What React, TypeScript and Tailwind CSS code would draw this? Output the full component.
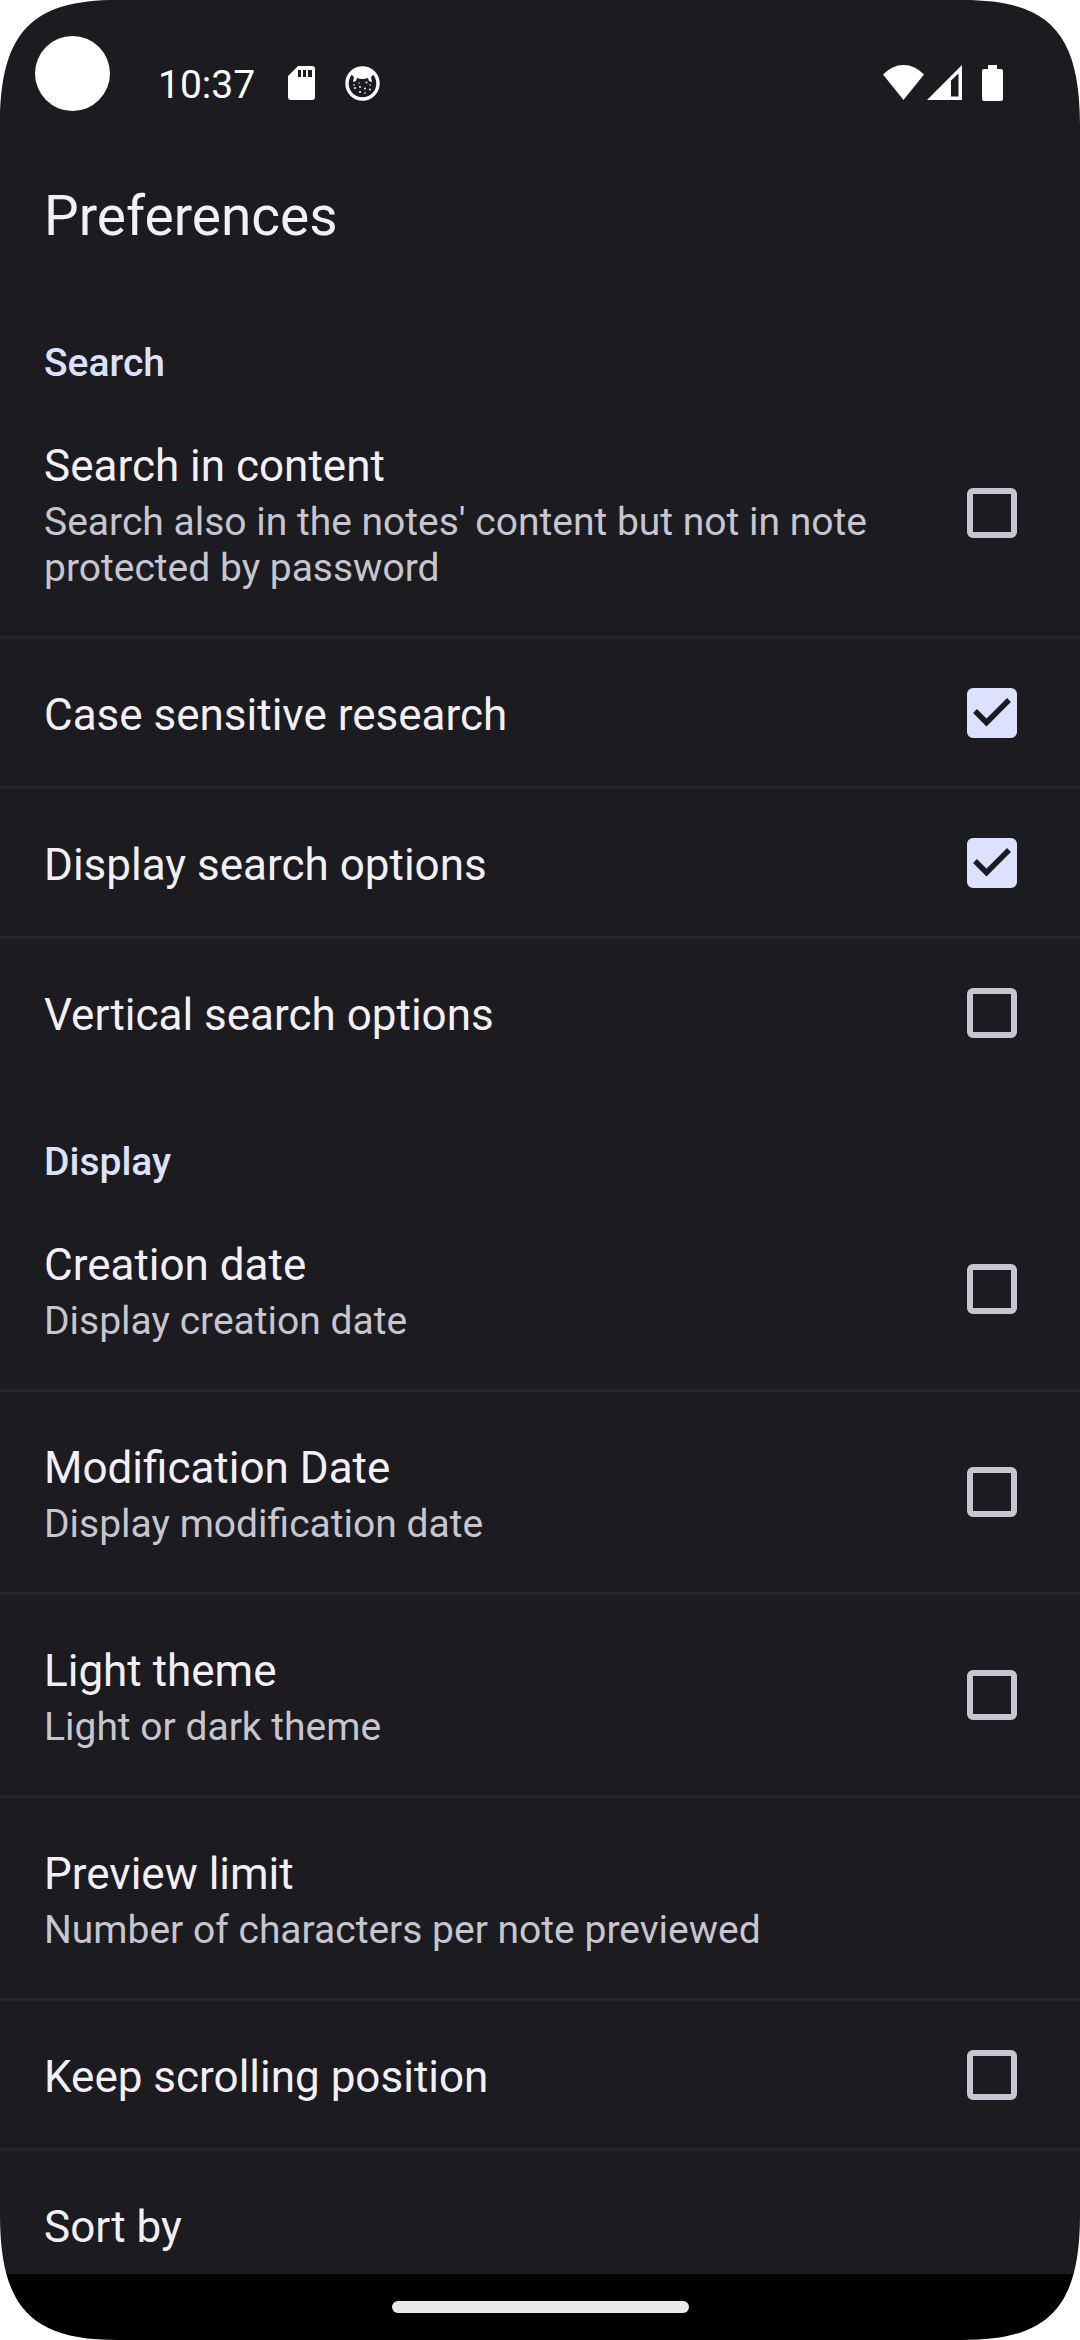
import { useState } from 'react';

interface Preference {
  id: string;
  title: string;
  summary?: string;
  checkbox?: boolean;
  defaultChecked?: boolean;
}

interface PreferenceGroup {
  title: string;
  items: Preference[];
}

const groups: PreferenceGroup[] = [
  {
    title: 'Search',
    items: [
      {
        id: 'search-in-content',
        title: 'Search in content',
        summary: "Search also in the notes' content but not in note protected by password",
        checkbox: true,
      },
      { id: 'case-sensitive', title: 'Case sensitive research', checkbox: true, defaultChecked: true },
      { id: 'search-options', title: 'Display search options', checkbox: true, defaultChecked: true },
      { id: 'vertical-options', title: 'Vertical search options', checkbox: true },
    ],
  },
  {
    title: 'Display',
    items: [
      { id: 'creation-date', title: 'Creation date', summary: 'Display creation date', checkbox: true },
      { id: 'modification-date', title: 'Modification Date', summary: 'Display modification date', checkbox: true },
      { id: 'light-theme', title: 'Light theme', summary: 'Light or dark theme', checkbox: true },
      { id: 'preview-limit', title: 'Preview limit', summary: 'Number of characters per note previewed' },
      { id: 'scroll-position', title: 'Keep scrolling position', checkbox: true },
      { id: 'sort-by', title: 'Sort by' },
    ],
  },
];

function StatusBar() {
  return (
    <div className="flex h-[148px] shrink-0 items-start justify-between pl-[35px] pr-[77px] pt-9 text-white">
      <div className="flex items-start">
        <div className="size-[75px] rounded-full bg-white" />
        <span className="ml-12 mt-[26px] text-[39px] leading-[46px]">10:37</span>
        <svg className="ml-[33px] mt-[30px] h-[34px] w-[27px]" viewBox="0 0 27 34" fill="currentColor">
          <path
            fillRule="evenodd"
            d="M10 0H24Q27 0 27 3V31Q27 34 24 34H3Q0 34 0 31V10ZM10 4V11H13V4ZM15 4V11H18V4ZM20 4V11H24V4Z"
          />
        </svg>
        <svg className="ml-[30px] mt-[30px] size-[35px]" viewBox="0 0 35 35" fill="none">
          <circle cx="17.5" cy="17.5" r="15.5" stroke="white" strokeWidth="3.4" />
          <path d="M6 8Q17 -3 29 8L26 11L27 16L24 15L23 12Q17 14 12 12L11 15L8 16L9 11Z" fill="white" />
          <g fill="white">
            <circle cx="9" cy="19" r="0.8" />
            <circle cx="10" cy="22" r="1" />
            <circle cx="14" cy="17" r="0.7" />
            <circle cx="15" cy="21" r="0.9" />
            <circle cx="21.5" cy="16.5" r="1" />
            <circle cx="20" cy="22.5" r="0.9" />
            <circle cx="15" cy="26" r="1" />
            <circle cx="20" cy="27" r="0.8" />
            <circle cx="25" cy="19" r="0.8" />
            <circle cx="25" cy="23.5" r="0.9" />
          </g>
        </svg>
      </div>
      <div className="mt-[29px] flex items-start">
        <svg className="h-[35px] w-[41px]" viewBox="0 0 41 35" fill="currentColor">
          <path d="M0 9.5Q9 0 20.5 0T41 9.5L20.5 35Z" />
        </svg>
        <svg className="ml-[3px] size-[35px]" viewBox="0 0 35 35" fill="currentColor">
          <path fillRule="evenodd" d="M35 0V35H0ZM24 15.5V31.5H31.5V8.5Z" />
        </svg>
        <svg className="ml-5 h-9 w-[21px]" viewBox="0 0 21 36" fill="currentColor">
          <path d="M6 0H15V4H19Q21 4 21 6V34Q21 36 19 36H2Q0 36 0 34V6Q0 4 2 4H6Z" />
        </svg>
      </div>
    </div>
  );
}

function PreferenceText({ title, summary }: { title: string; summary?: string }) {
  return (
    <span className="block flex-1 pb-[45px] pt-[50px]">
      <span className="block text-[44px] leading-[52px] text-[#f3eff7]">{title}</span>
      {summary && <span className="mt-[7px] block text-[39px] leading-[46px] text-[#c7c5d0]">{summary}</span>}
    </span>
  );
}

function PreferenceRow({ item }: { item: Preference }) {
  const [checked, setChecked] = useState(Boolean(item.defaultChecked));

  if (!item.checkbox) {
    return (
      <button type="button" className="flex w-full items-center px-11 text-left">
        <PreferenceText title={item.title} summary={item.summary} />
      </button>
    );
  }

  return (
    <label htmlFor={item.id} className="flex items-center gap-[60px] pl-11 pr-[63px]">
      <PreferenceText title={item.title} summary={item.summary} />
      <span className="grid shrink-0">
        <input
          id={item.id}
          type="checkbox"
          checked={checked}
          onChange={(e) => setChecked(e.target.checked)}
          className="peer col-start-1 row-start-1 size-[50px] appearance-none rounded-md border-[6px] border-[#c7c5d0] checked:border-[#dce1ff] checked:bg-[#dce1ff]"
        />
        <svg
          className="pointer-events-none invisible col-start-1 row-start-1 size-[50px] peer-checked:visible"
          viewBox="0 0 50 50"
          fill="none"
          stroke="#1b1b20"
          strokeWidth="5.5"
        >
          <path d="M8 23L19.5 34.5L42 12" />
        </svg>
      </span>
    </label>
  );
}

// Rounded display corner, drawn over whatever sits in that corner
function ScreenCorner({ className }: { className: string }) {
  return (
    <svg className={`pointer-events-none absolute size-[125px] ${className}`} viewBox="0 0 125 125" fill="white">
      <path d="M0 0H117C33 0 0 31 0 125Z" />
    </svg>
  );
}

export default function App() {
  return (
    <div className="relative flex h-screen flex-col overflow-hidden bg-[#1b1b20] font-[Roboto,sans-serif]">
      <StatusBar />
      <header className="flex h-[139px] shrink-0 items-center px-11 pb-1">
        <h1 className="text-[55px] leading-[64px] text-[#f3eff7]">Preferences</h1>
      </header>

      <main className="min-h-0 flex-1 overflow-y-auto [scrollbar-width:none]">
        {groups.map((group) => (
          <section key={group.title}>
            <h2 className="px-11 pb-1 pt-[53px] text-[39px] font-medium leading-[46px] text-[#dce1ff]">
              {group.title}
            </h2>
            <ul className="divide-y-[3px] divide-[#26272b]">
              {group.items.map((item) => (
                <li key={item.id}>
                  <PreferenceRow item={item} />
                </li>
              ))}
            </ul>
          </section>
        ))}
      </main>

      <footer className="flex h-[66px] shrink-0 items-center justify-center bg-black">
        <div className="h-3 w-[297px] rounded-full bg-[#e9e9ec]" />
      </footer>

      <ScreenCorner className="left-0 top-0" />
      <ScreenCorner className="right-0 top-0 -scale-x-100" />
      <ScreenCorner className="bottom-0 left-0 -scale-y-100" />
      <ScreenCorner className="bottom-0 right-0 -scale-100" />
    </div>
  );
}
